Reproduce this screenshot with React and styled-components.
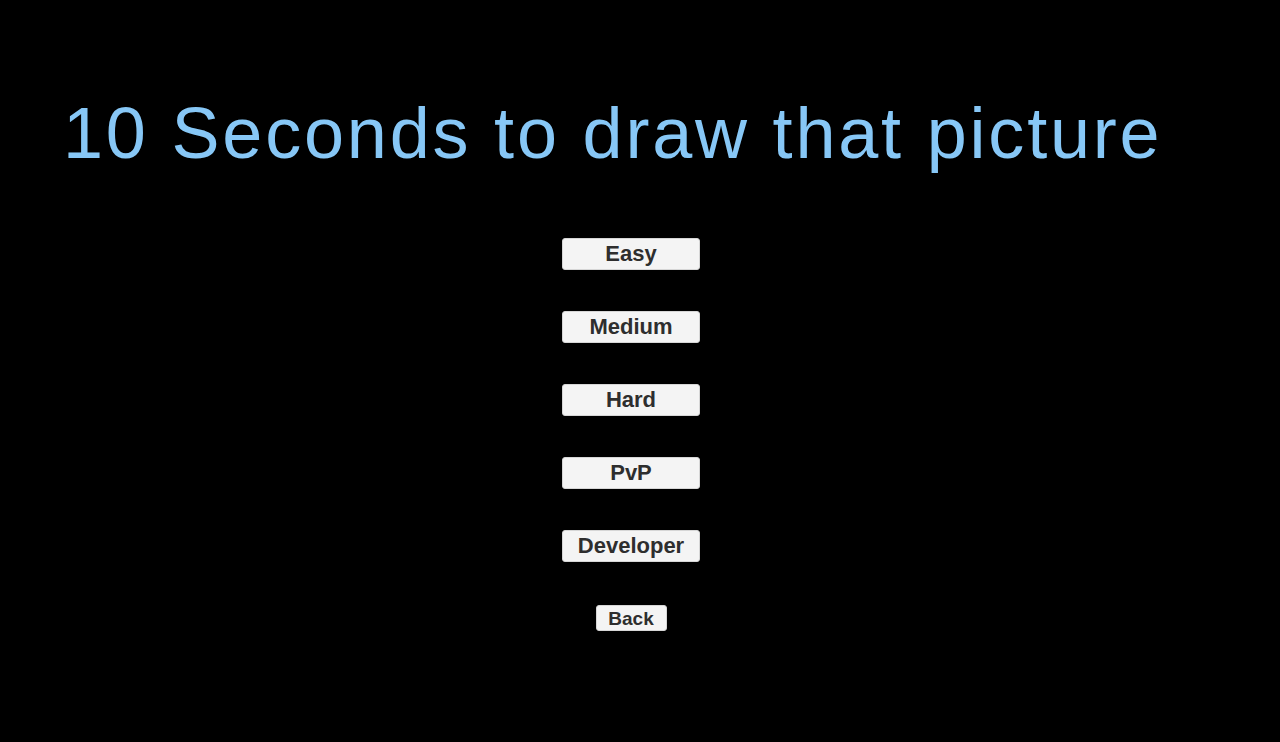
import React from "react";
import styled, { createGlobalStyle } from "styled-components";

const GlobalStyle = createGlobalStyle`
  html, body {
    margin: 0;
    padding: 0;
    background: #000;
  }
  body {
    font-family: "Liberation Sans", Arial, sans-serif;
  }
`;

const Page = styled.main`
  min-height: 100vh;
  background: #000;
  display: flex;
  flex-direction: column;
`;

const Title = styled.h1`
  margin: 94px 0 0 63px;
  font-family: "Liberation Sans", Arial, sans-serif;
  font-weight: 400;
  font-size: 72px;
  line-height: 78px;
  letter-spacing: 2.8px;
  color: #87c7f6;
  white-space: nowrap;
`;

const Menu = styled.nav`
  display: flex;
  flex-direction: column;
  align-items: center;
  gap: 41px;
  margin-top: 66px;
  padding-right: 18px;
`;

const MenuButton = styled.button`
  box-sizing: border-box;
  width: ${(p) => (p.small ? "71px" : "138px")};
  height: ${(p) => (p.small ? "26px" : "32px")};
  margin-top: ${(p) => (p.small ? "2px" : "0")};
  padding: 0;
  background: #f4f4f4;
  border: 1px solid #d6d6d6;
  border-radius: 3px;
  color: #2e2e2e;
  font-family: "Liberation Sans", Arial, sans-serif;
  font-weight: 700;
  font-size: ${(p) => (p.small ? "19px" : "22px")};
  line-height: 1;
  cursor: pointer;
`;

const levels = ["Easy", "Medium", "Hard", "PvP", "Developer"];

const App = () => {
  return (
    <>
      <GlobalStyle />
      <Page>
        <Title>10 Seconds to draw that picture</Title>
        <Menu>
          {levels.map((l) => (
            <MenuButton key={l}>{l}</MenuButton>
          ))}
          <MenuButton small>Back</MenuButton>
        </Menu>
      </Page>
    </>
  );
};

export default App;
